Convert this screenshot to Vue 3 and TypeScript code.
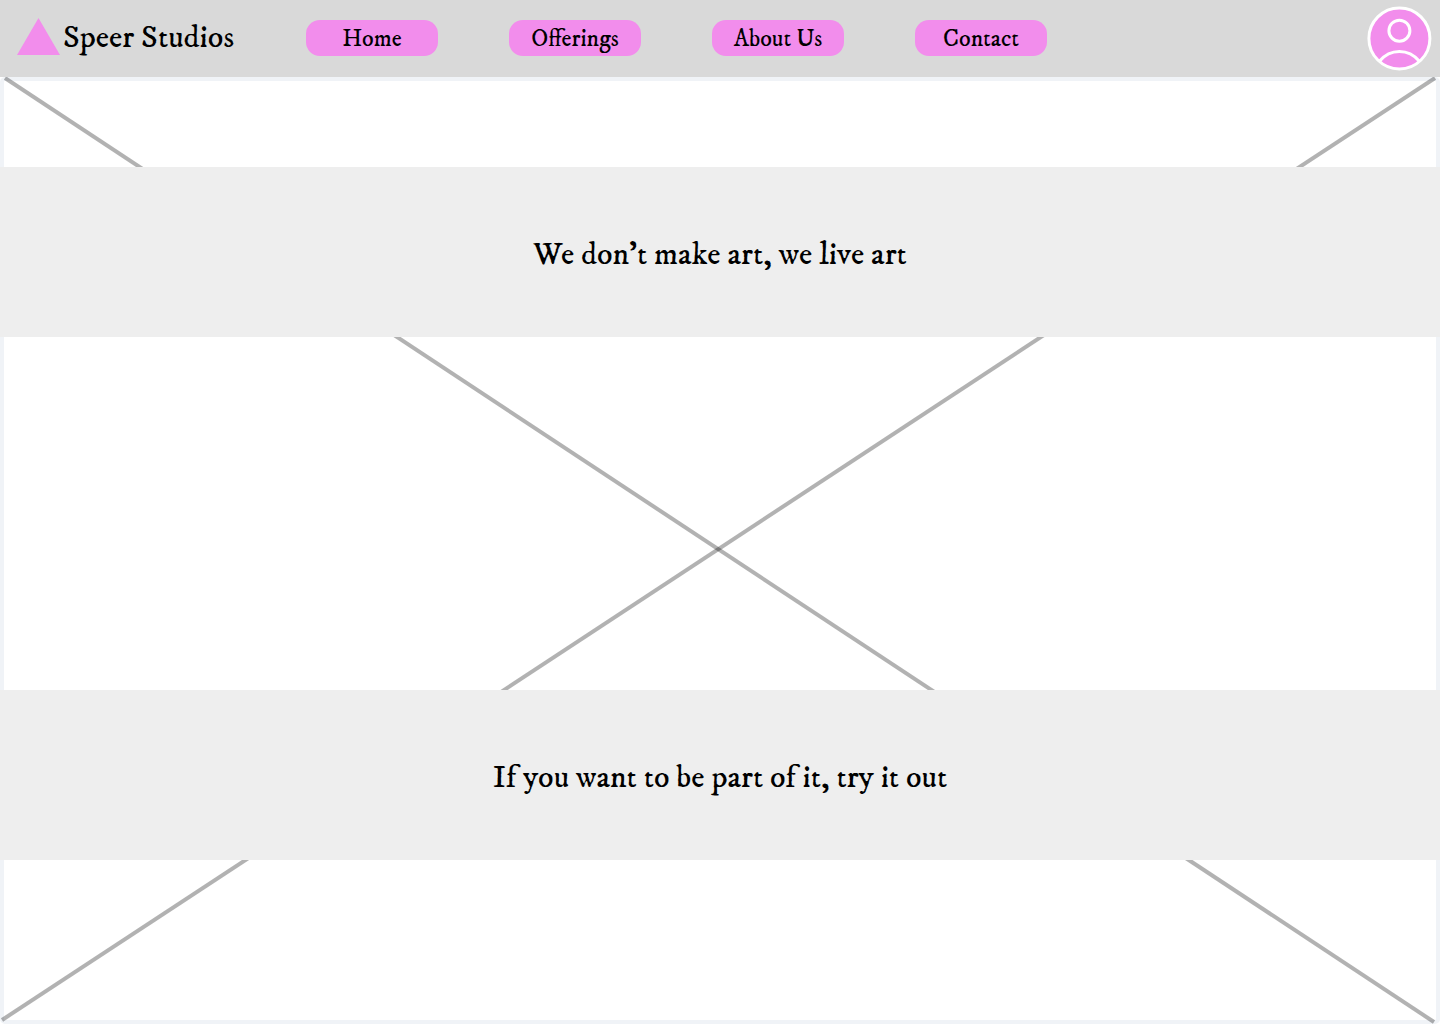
<script setup lang="ts">
interface NavItem {
  label: string
  href: string
}

const navItems: NavItem[] = [
  { label: 'Home', href: '#home' },
  { label: 'Offerings', href: '#offerings' },
  { label: 'About Us', href: '#about' },
  { label: 'Contact', href: '#contact' },
]
</script>

<template>
  <div class="page">
    <header class="bar">
      <a class="brand" href="#home">
        <svg class="logo" viewBox="0 0 43 37" aria-hidden="true">
          <path d="M21.5 0L43 37H0Z" fill="#f28dec" />
        </svg>
        <span>Speer Studios</span>
      </a>
      <nav class="nav" aria-label="Main">
        <a v-for="item in navItems" :key="item.label" class="pill" :href="item.href">{{ item.label }}</a>
      </nav>
      <button class="account" type="button" aria-label="Account">
        <svg viewBox="0 0 64 64" fill="none" stroke="#fff" stroke-width="3" aria-hidden="true">
          <circle cx="31.4" cy="32.4" r="30.5" fill="#f28dec" />
          <circle cx="31.4" cy="24.7" r="10.5" />
          <path d="M11.4 55.2C22.4 42.2 40.4 42.2 51.4 55.2" />
        </svg>
      </button>
    </header>

    <main class="hero">
      <div class="frame" aria-hidden="true"></div>
      <svg class="cross" viewBox="0 0 1440 947" preserveAspectRatio="none" aria-hidden="true">
        <path d="M5 1L1434 945" />
        <path d="M1435 1L2 943" />
      </svg>
      <div class="space-top"></div>
      <section class="band"><h1>We don’t make art, we live art</h1></section>
      <div class="space-middle"></div>
      <section class="band"><h2>If you want to be part of it, try it out</h2></section>
      <div class="space-bottom"></div>
    </main>
  </div>
</template>

<style>
body {
  margin: 0;
}
</style>

<style scoped>
.page {
  display: flex;
  flex-direction: column;
  min-height: 100vh;
  color: #000;
  background: #fff;
  font-family: "IM Fell DW Pica", "IM Fell English", "Liberation Serif", serif;
}

.bar {
  display: flex;
  align-items: center;
  box-sizing: border-box;
  min-height: 77px;
  padding: 0 8px 1px 17px;
  background: #d9d9d9;
}

.brand {
  display: flex;
  align-items: center;
  flex: none;
  gap: 3px;
  width: 289px;
  color: inherit;
  font-size: 32px;
  line-height: 36px;
  text-decoration: none;
  white-space: nowrap;
}

.logo {
  width: 43px;
  height: 37px;
  margin-bottom: 4px;
}

.nav {
  display: flex;
  gap: 71px;
}

.pill {
  width: 132px;
  padding-top: 2px;
  border-radius: 14px;
  color: inherit;
  background: #f28dec;
  font-size: 24px;
  line-height: 34px;
  text-align: center;
  text-decoration: none;
}

.account {
  width: 64px;
  height: 64px;
  margin-left: auto;
  padding: 0;
  border: 0;
  border-radius: 50%;
  background: none;
  cursor: pointer;
}

.account svg {
  display: block;
  overflow: visible;
}

.hero {
  position: relative;
  display: flex;
  flex: 1;
  flex-direction: column;
}

.frame {
  position: absolute;
  inset: 0;
  border: 4px solid #f0f3f7;
  border-radius: 5px;
}

.cross {
  position: absolute;
  inset: 0;
  width: 100%;
  height: 100%;
}

.cross path {
  fill: none;
  stroke: #000;
  stroke-opacity: 0.3;
  stroke-width: 4px;
  vector-effect: non-scaling-stroke;
}

.space-top {
  flex: 90 0 0;
}

.space-middle {
  flex: 353 0 0;
}

.space-bottom {
  flex: 164 0 0;
}

.band {
  position: relative;
  display: flex;
  align-items: center;
  justify-content: center;
  box-sizing: border-box;
  min-height: 170px;
  padding-top: 6px;
  background: #eee;
}

.band h1,
.band h2 {
  margin: 0;
  font-size: 32px;
  font-weight: 400;
  line-height: 40px;
  text-align: center;
}
</style>
